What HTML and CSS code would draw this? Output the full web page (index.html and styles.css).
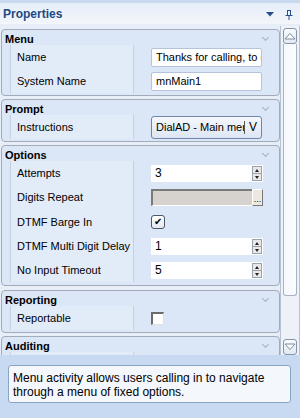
FILE: index.html
```html
<!DOCTYPE html>
<html>
  <head>
    <link rel="stylesheet" href="styles.css">
  </head>
  <body>
    <div class="panel">
      <div class="panel-header">
        <span class="panel-title">Properties</span>
        <span class="header-icons">
          <svg width="8" height="5" viewBox="0 0 8 5"><path d="M0 0H8L4 4.5Z" fill="#2a4f86"/></svg>
          <svg width="8" height="10" viewBox="0 0 8 10"><path d="M2 0.5H6M2.5 0.5V5.5M5.5 0.5V5.5M0.5 5.5H7.5M4 5.5V10" stroke="#2a4f86" fill="none"/></svg>
        </span>
      </div>

      <div class="main">
        <div class="groups">
          <div class="group">
            <div class="group-head">Menu<span class="chev"></span></div>
            <div class="row">
              <div class="label">Name</div>
              <div class="value"><div class="input">Thanks for calling, to cont</div></div>
            </div>
            <div class="row">
              <div class="label">System Name</div>
              <div class="value"><div class="input">mnMain1</div></div>
            </div>
          </div>

          <div class="group">
            <div class="group-head">Prompt<span class="chev"></span></div>
            <div class="row">
              <div class="label">Instructions</div>
              <div class="value">
                <div class="combo"><span class="combo-text">DialAD - Main menu</span><span class="combo-btn">V</span></div>
              </div>
            </div>
          </div>

          <div class="group group-options">
            <div class="group-head">Options<span class="chev"></span></div>
            <div class="row">
              <div class="label">Attempts</div>
              <div class="value"><div class="spin"><span class="spin-text">3</span><span class="spin-btns"><i class="up"></i><i class="down"></i></span></div></div>
            </div>
            <div class="row">
              <div class="label">Digits Repeat</div>
              <div class="value"><div class="picker"><span class="picker-box"></span><span class="picker-btn">...</span></div></div>
            </div>
            <div class="row row-tall">
              <div class="label">DTMF Barge In</div>
              <div class="value"><span class="check checked">&#10004;</span></div>
            </div>
            <div class="row">
              <div class="label">DTMF Multi Digit Delay</div>
              <div class="value"><div class="spin"><span class="spin-text">1</span><span class="spin-btns"><i class="up"></i><i class="down"></i></span></div></div>
            </div>
            <div class="row">
              <div class="label">No Input Timeout</div>
              <div class="value"><div class="spin"><span class="spin-text">5</span><span class="spin-btns"><i class="up"></i><i class="down"></i></span></div></div>
            </div>
          </div>

          <div class="group">
            <div class="group-head">Reporting<span class="chev"></span></div>
            <div class="row">
              <div class="label">Reportable</div>
              <div class="value"><span class="check plain"></span></div>
            </div>
          </div>

          <div class="group">
            <div class="group-head">Auditing<span class="chev"></span></div>
            <div class="row">
              <div class="label"></div>
              <div class="value"></div>
            </div>
          </div>
        </div>

        <div class="scrollbar">
          <div class="sb-btn"><svg width="12" height="8" viewBox="0 0 12 8"><path d="M1 7L6 1.5L11 7Z" fill="#fff" stroke="#7d8ca3"/></svg></div>
          <div class="sb-thumb"></div>
          <div class="sb-track"></div>
          <div class="sb-btn"><svg width="12" height="8" viewBox="0 0 12 8"><path d="M1 1L6 6.5L11 1Z" fill="#fff" stroke="#7d8ca3"/></svg></div>
        </div>
      </div>

      <div class="desc-area">
        <div class="desc">Menu activity allows users calling in to navigate through a menu of fixed options.</div>
      </div>
    </div>
  </body>
</html>
```

FILE: styles.css
```css
* { box-sizing: border-box; }
body {
  margin: 0;
  font: 11px "Liberation Sans", Arial, sans-serif;
  color: #000;
}
.panel {
  width: 300px;
  height: 418px;
  display: flex;
  flex-direction: column;
  background: #e3ebf7;
  overflow: hidden;
}
.panel-header {
  height: 24px;
  flex: none;
  display: flex;
  align-items: center;
  justify-content: space-between;
  padding: 0 7px 0 3px;
  border-top: 3px solid #c9daf0;
  background: linear-gradient(#e6eef9, #f3f6fb);
}
.panel-title {
  font-weight: bold;
  font-size: 12px;
  color: #1e4a84;
}
.header-icons {
  display: flex;
  align-items: center;
  gap: 11px;
  padding-top: 2px;
}
.main {
  height: 331px;
  flex: none;
  display: flex;
  padding-top: 5px;
  background: #e7eef8;
}
.groups {
  flex: 1;
  padding-left: 1px;
  overflow: hidden;
}
.group {
  border: 1px solid #a2abb9;
  border-radius: 4px;
  background: #dbe6f6;
  margin-bottom: 3px;
  padding-bottom: 2px;
}
.group-options {
  padding-bottom: 3px;
  margin-bottom: 4px;
}
.group-head {
  position: relative;
  height: 15px;
  line-height: 18px;
  padding-left: 3px;
  font-weight: bold;
  color: #000;
}
.chev {
  position: absolute;
  right: 11px;
  top: 5px;
  width: 5px;
  height: 5px;
  border-right: 1px solid #a5b0c0;
  border-bottom: 1px solid #a5b0c0;
  transform: rotate(45deg);
}
.row {
  display: grid;
  grid-template-columns: 124px 1fr;
  height: 24px;
  margin-left: 8px;
}
.row-tall {
  height: 25px;
}
.label {
  display: flex;
  align-items: center;
  padding-left: 6px;
  border-left: 1px solid #c4cfdf;
  border-right: 1px solid #c4cfdf;
  background: #e2ebf8;
  white-space: nowrap;
}
.value {
  display: flex;
  align-items: center;
  padding-left: 17px;
}
.input {
  width: 111px;
  height: 19px;
  line-height: 17px;
  padding-left: 4px;
  background: #fff;
  border: 1px solid #b5c4d8;
  border-radius: 2px;
  white-space: nowrap;
  overflow: hidden;
}
.combo {
  width: 111px;
  height: 23px;
  display: flex;
  align-items: center;
  border: 1px solid #6f86ab;
  border-radius: 3px;
  background: linear-gradient(#f5f8fc, #dce6f3);
}
.combo-text {
  width: 93px;
  padding-left: 4px;
  white-space: nowrap;
  overflow: hidden;
  border-right: 1px solid #555;
  line-height: 13px;
}
.combo-btn {
  flex: 1;
  text-align: center;
  font-size: 12px;
}
.spin {
  width: 112px;
  height: 17px;
  display: flex;
  background: #fff;
}
.spin-text {
  flex: 1;
  padding-left: 4px;
  font-size: 12px;
  line-height: 17px;
}
.spin-btns {
  width: 10px;
  margin: 1px 1px 1px 0;
  display: flex;
  flex-direction: column;
  border: 1px solid #9aa3ae;
  background: #e8e8e8;
}
.spin-btns i {
  flex: 1;
  position: relative;
}
.spin-btns i::after {
  content: "";
  position: absolute;
  left: 2px;
  border-left: 2px solid transparent;
  border-right: 2px solid transparent;
}
.spin-btns .up { border-bottom: 1px solid #9aa3ae; }
.spin-btns .up::after { top: 2px; border-bottom: 3px solid #222; }
.spin-btns .down::after { top: 2px; border-top: 3px solid #222; }
.picker {
  width: 112px;
  height: 17px;
  display: flex;
}
.picker-box {
  flex: 1;
  background: #d6d3ce;
  border-top: 2px solid #7a7a7a;
  border-left: 2px solid #7a7a7a;
  border-bottom: 1px solid #fff;
}
.picker-btn {
  width: 11px;
  background: #ece9e2;
  border: 1px solid #fff;
  border-right-color: #777;
  border-bottom-color: #777;
  font-size: 9px;
  line-height: 18px;
  text-align: center;
}
.check {
  width: 14px;
  height: 14px;
  display: flex;
  align-items: center;
  justify-content: center;
  font-size: 10px;
  line-height: 1;
}
.check.checked {
  border: 1px solid #4b5666;
  border-radius: 3px;
  background: linear-gradient(#fff, #e4e8ee);
}
.check.plain {
  width: 13px;
  height: 13px;
  background: #fff;
  border-top: 2px solid #6b6b6b;
  border-left: 2px solid #6b6b6b;
  border-right: 1px solid #e0e0e0;
  border-bottom: 1px solid #e0e0e0;
}
.scrollbar {
  width: 20px;
  flex: none;
  display: flex;
  flex-direction: column;
  padding: 0 2px 0 2px;
  margin-top: -3px;
  border-left: 1px solid #b7c2d2;
  border-right: 1px solid #b7c2d2;
  background: #eef2f8;
}
.sb-btn {
  height: 16px;
  flex: none;
  display: flex;
  align-items: center;
  justify-content: center;
  margin-top: 2px;
  border: 1px solid #8795aa;
  border-radius: 3px;
  background: linear-gradient(#f8fafd, #e2e9f3);
}
.sb-thumb {
  height: 252px;
  flex: none;
  border: 1px solid #a7b3c4;
  border-top: none;
  border-radius: 0 0 3px 3px;
  background: linear-gradient(90deg, #f5f8fc, #fbfcfe);
}
.sb-track {
  flex: 1;
}
.desc-area {
  flex: 1;
  padding: 10px 9px 0 8px;
  background: #c8daf2;
}
.desc {
  height: 38px;
  padding: 5px 4px 0;
  font-size: 12px;
  line-height: 14px;
  background: #f4f7fb;
  border: 1px solid #88a6c3;
  border-radius: 3px;
}
```
